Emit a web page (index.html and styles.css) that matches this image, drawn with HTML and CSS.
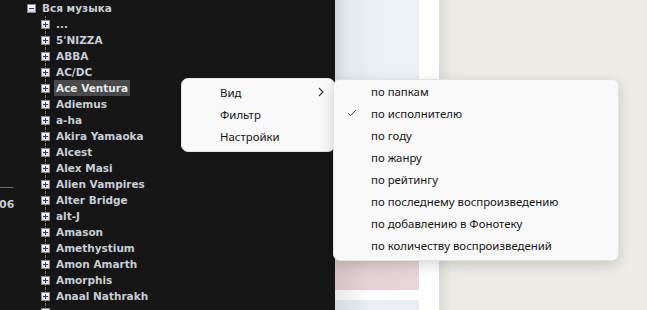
FILE: index.html
```html
<!DOCTYPE html>
<html lang="ru">
<head>
  <meta charset="UTF-8" />
  <title>Фонотека</title>
  <link rel="stylesheet" href="styles.css">
</head>
<body>
  <div class="app">
    <div class="tree-pane">
      <div class="side-stub">
        <div class="stub-line"></div>
        <div class="stub-num">06</div>
      </div>
      <ul class="tree">
        <li class="root"><span class="box minus"></span><span class="label">Вся музыка</span></li>
        <li class="item"><span class="box"></span><span class="label">...</span></li>
        <li class="item"><span class="box"></span><span class="label">5'NIZZA</span></li>
        <li class="item"><span class="box"></span><span class="label">ABBA</span></li>
        <li class="item"><span class="box"></span><span class="label">AC/DC</span></li>
        <li class="item"><span class="box"></span><span class="label selected">Ace Ventura</span></li>
        <li class="item"><span class="box"></span><span class="label">Adiemus</span></li>
        <li class="item"><span class="box"></span><span class="label">a-ha</span></li>
        <li class="item"><span class="box"></span><span class="label">Akira Yamaoka</span></li>
        <li class="item"><span class="box"></span><span class="label">Alcest</span></li>
        <li class="item"><span class="box"></span><span class="label">Alex Masi</span></li>
        <li class="item"><span class="box"></span><span class="label">Alien Vampires</span></li>
        <li class="item"><span class="box"></span><span class="label">Alter Bridge</span></li>
        <li class="item"><span class="box"></span><span class="label">alt-J</span></li>
        <li class="item"><span class="box"></span><span class="label">Amason</span></li>
        <li class="item"><span class="box"></span><span class="label">Amethystium</span></li>
        <li class="item"><span class="box"></span><span class="label">Amon Amarth</span></li>
        <li class="item"><span class="box"></span><span class="label">Amorphis</span></li>
        <li class="item"><span class="box"></span><span class="label">Anaal Nathrakh</span></li>
        <li class="item"><span class="box"></span></li>
      </ul>
    </div>
    <div class="light-pane">
      <div class="light-top"></div>
      <div class="light-pink"></div>
      <div class="light-white"></div>
      <div class="light-bottom"></div>
    </div>
    <div class="white-gap"></div>
    <div class="main-pane"></div>
  </div>

  <div class="menu">
    <div class="menu-row"><span class="menu-text">Вид</span><span class="arrow">
      <svg width="6" height="10" viewBox="0 0 6 10"><path d="M1 1 L5 5 L1 9" fill="none" stroke="#333" stroke-width="1.1"/></svg>
    </span></div>
    <div class="menu-row"><span class="menu-text">Фильтр</span></div>
    <div class="menu-row"><span class="menu-text">Настройки</span></div>
  </div>

  <div class="submenu">
    <div class="sub-row"><span class="check"></span><span>по папкам</span></div>
    <div class="sub-row"><span class="check">
      <svg width="10" height="8" viewBox="0 0 10 8"><path d="M1 4 L3.6 6.6 L9 1" fill="none" stroke="#444" stroke-width="1"/></svg>
    </span><span>по исполнителю</span></div>
    <div class="sub-row"><span class="check"></span><span>по году</span></div>
    <div class="sub-row"><span class="check"></span><span>по жанру</span></div>
    <div class="sub-row"><span class="check"></span><span>по рейтингу</span></div>
    <div class="sub-row"><span class="check"></span><span>по последнему воспроизведению</span></div>
    <div class="sub-row"><span class="check"></span><span>по добавлению в Фонотеку</span></div>
    <div class="sub-row"><span class="check"></span><span>по количеству воспроизведений</span></div>
  </div>
</body>
</html>
```

FILE: styles.css
```css
body {
  margin: 0;
  width: 647px;
  height: 310px;
  overflow: hidden;
  font-family: "Noto Sans", sans-serif;
}
.app {
  display: flex;
  height: 310px;
}
.tree-pane {
  width: 335px;
  background: #161616;
  display: flex;
  overflow: hidden;
}
.side-stub {
  width: 27px;
  padding-top: 187px;
}
.stub-line {
  width: 13px;
  height: 1px;
  background: #6a6a6a;
}
.stub-num {
  margin-top: 10px;
  font-family: "DejaVu Sans", sans-serif;
  font-weight: bold;
  font-size: 11px;
  color: #c4ccd4;
  margin-left: -1px;
}
.tree {
  list-style: none;
  margin: 0;
  padding: 0;
  font-family: "DejaVu Sans", sans-serif;
  font-weight: bold;
  font-size: 10.5px;
  color: #c8cdd4;
}
.tree li {
  height: 16px;
  display: flex;
  align-items: center;
  position: relative;
  flex: none;
}
.tree .item {
  padding-left: 14px;
}
.tree .item::before {
  content: "";
  position: absolute;
  left: 18px;
  top: 0;
  bottom: 0;
  border-left: 1px dotted #7a7a7a;
}
.box {
  width: 7px;
  height: 7px;
  border: 1px solid #8a8a8a;
  background: linear-gradient(#ffffff, #d8d8d8);
  position: relative;
  z-index: 1;
  flex: none;
}
.box::before {
  content: "";
  position: absolute;
  left: 1px;
  top: 3px;
  width: 5px;
  height: 1px;
  background: #1c3a9c;
}
.box::after {
  content: "";
  position: absolute;
  left: 3px;
  top: 1px;
  width: 1px;
  height: 5px;
  background: #1c3a9c;
}
.box.minus::after {
  display: none;
}
.label {
  margin-left: 4px;
  padding: 0 2px;
  line-height: 16px;
  white-space: nowrap;
}
.label.selected {
  background: #4a4a4a;
  color: #e6e8ea;
}
.light-pane {
  width: 84px;
  display: flex;
  flex-direction: column;
}
.light-top {
  height: 260px;
  background: linear-gradient(to right, #d2d7dc, #e4e9ee 15%, #ecf1f5 60%);
}
.light-pink {
  height: 30px;
  background: linear-gradient(to right, #d4c2c4, #e4d2d4 40%, #e8d6d8);
}
.light-white {
  height: 10px;
  background: linear-gradient(to right, #e8e8e8, #ffffff 40%);
}
.light-bottom {
  flex: 1;
  background: linear-gradient(to right, #d6dbe0, #eaeef2 40%);
}
.white-gap {
  width: 20px;
  background: #fff;
}
.main-pane {
  flex: 1;
  background: linear-gradient(to right, #dcdcd6, #ebebe4 12px, #edece6 30px);
}
.menu {
  position: absolute;
  left: 181px;
  top: 78px;
  width: 152px;
  padding: 2px 0 4px;
  background: #f9f9f9;
  border: 1px solid #e2e2e2;
  border-radius: 7px;
  box-shadow: 0 2px 8px rgba(0, 0, 0, 0.12);
  font-size: 11.4px;
  color: #141414;
}
.menu-row {
  height: 22px;
  display: flex;
  align-items: center;
  padding-left: 38px;
  padding-right: 10px;
}
.menu-text {
  flex: 1;
}
.arrow {
  display: flex;
  align-items: center;
}
.submenu {
  position: absolute;
  left: 333px;
  top: 79px;
  width: 284px;
  padding: 0 0 4px;
  background: #f9f9f9;
  border: 1px solid #e2e2e2;
  border-radius: 7px;
  box-shadow: 0 4px 14px rgba(0, 0, 0, 0.16);
  font-size: 11.4px;
  color: #141414;
}
.sub-row {
  height: 22px;
  display: flex;
  align-items: center;
}
.check {
  width: 37px;
  padding-left: 13px;
  box-sizing: border-box;
  display: flex;
  align-items: center;
}
```
